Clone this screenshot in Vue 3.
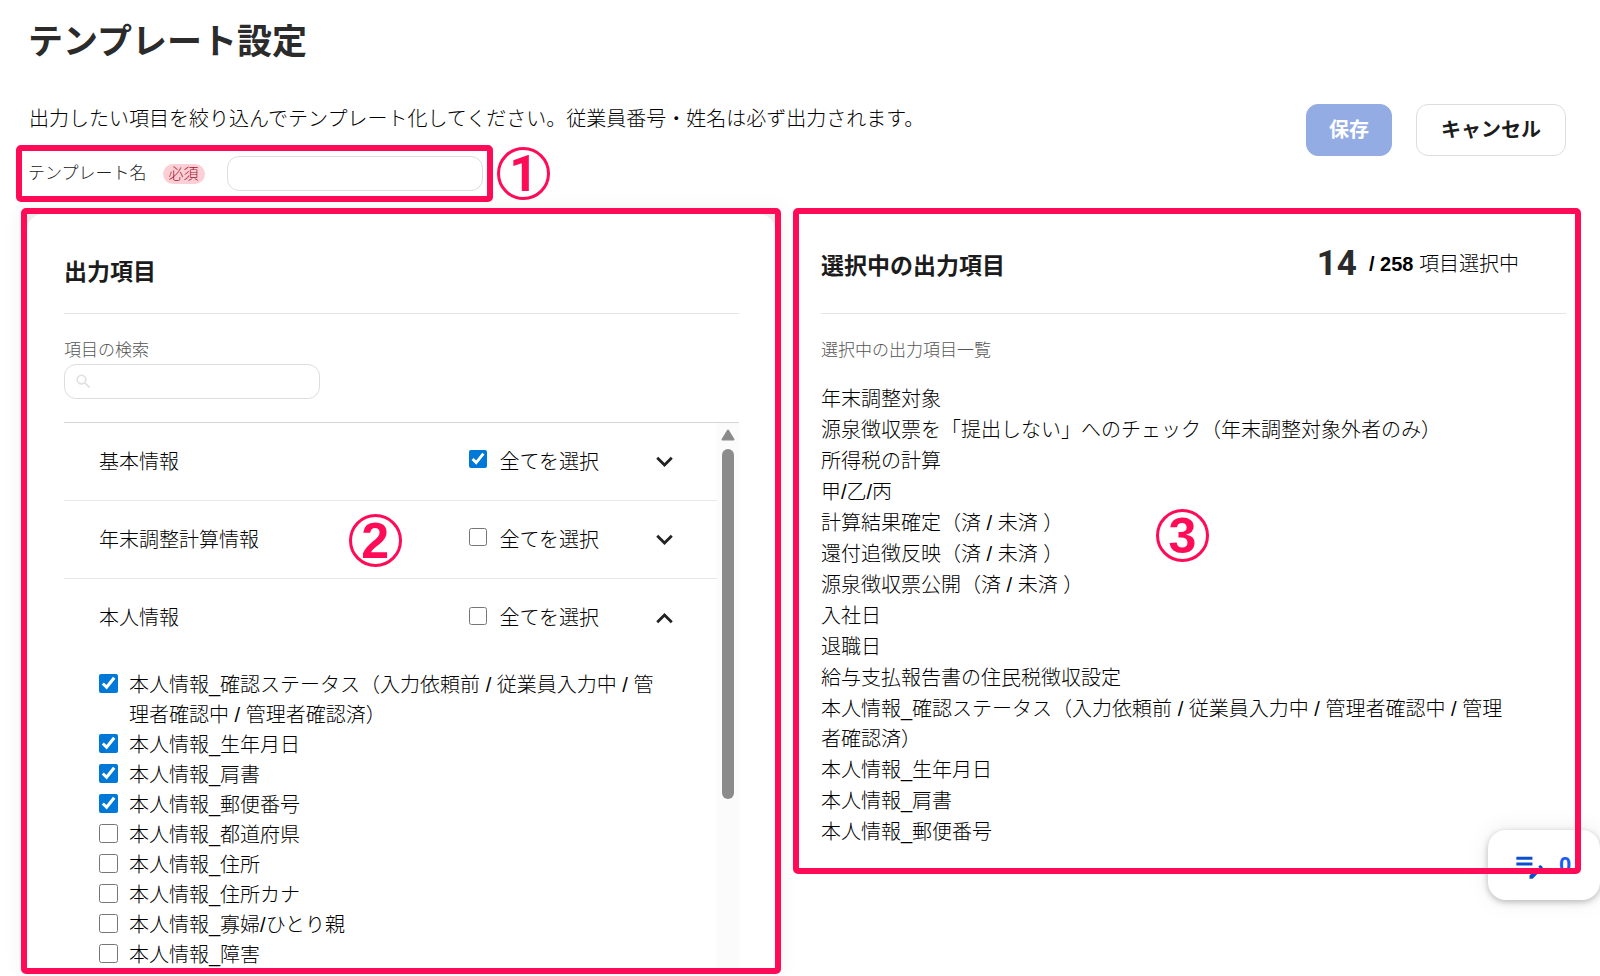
<script setup>
import { ref } from 'vue'

const name = ref('')
const query = ref('')

const groups = ref([
  { id: 'basic', label: '基本情報', all: true, open: false },
  { id: 'yearend', label: '年末調整計算情報', all: false, open: false },
  { id: 'person', label: '本人情報', all: false, open: true }
])

const fields = ref([
  { label: '本人情報_確認ステータス（入力依頼前 / 従業員入力中 / 管理者確認中 / 管理者確認済）', on: true },
  { label: '本人情報_生年月日', on: true },
  { label: '本人情報_肩書', on: true },
  { label: '本人情報_郵便番号', on: true },
  { label: '本人情報_都道府県', on: false },
  { label: '本人情報_住所', on: false },
  { label: '本人情報_住所カナ', on: false },
  { label: '本人情報_寡婦/ひとり親', on: false },
  { label: '本人情報_障害', on: false }
])

const selected = [
  '年末調整対象',
  '源泉徴収票を「提出しない」へのチェック（年末調整対象外者のみ）',
  '所得税の計算',
  '甲/乙/丙',
  '計算結果確定（済 / 未済 ）',
  '還付追徴反映（済 / 未済 ）',
  '源泉徴収票公開（済 / 未済 ）',
  '入社日',
  '退職日',
  '給与支払報告書の住民税徴収設定',
  '本人情報_確認ステータス（入力依頼前 / 従業員入力中 / 管理者確認中 / 管理者確認済）',
  '本人情報_生年月日',
  '本人情報_肩書',
  '本人情報_郵便番号'
]
</script>

<template>
  <main class="page">
    <h1 class="title">テンプレート設定</h1>

    <header class="head">
      <div class="intro">
        <p class="lead">出力したい項目を絞り込んでテンプレート化してください。従業員番号・姓名は必ず出力されます。</p>
        <div class="name-line">
          <div class="name-field marked">
            <label for="tpl-name">テンプレート名</label>
            <span class="badge">必須</span>
            <input id="tpl-name" v-model="name" class="text-box" type="text" />
          </div>
          <span class="marker on-name">1</span>
        </div>
      </div>
      <div class="actions">
        <button type="button" class="btn save">保存</button>
        <button type="button" class="btn">キャンセル</button>
      </div>
    </header>

    <div class="columns">
      <section class="panel source marked">
        <div class="card">
          <h2 class="heading">出力項目</h2>
          <label class="caption" for="search">項目の検索</label>
          <div class="search">
            <svg viewBox="0 0 24 24" aria-hidden="true"><path d="M15.5 14h-.79l-.28-.27A6.47 6.47 0 0 0 16 9.500 6.500 6.500 0 1 0 9.500 16c1.610 0 3.090-.59 4.230-1.570l.27.28v.79l5 4.990L20.490 19l-4.990-5zm-6 0C7.010 14 5 11.990 5 9.500S7.010 5 9.500 5 14 7.010 14 9.500 11.990 14 9.500 14z" /></svg>
            <input id="search" v-model="query" class="text-box" type="text" />
          </div>

          <div class="scroller">
            <div class="groups">
              <div v-for="g in groups" :key="g.id" class="group">
                <span class="group-name">{{ g.label }}</span>
                <label class="all"><input v-model="g.all" type="checkbox" />全てを選択</label>
                <button type="button" class="toggle" :aria-label="g.label" :aria-expanded="g.open" @click="g.open = !g.open">
                  <svg viewBox="0 0 24 24" aria-hidden="true">
                    <path v-if="g.open" d="M7.410 15.410L12 10.830l4.590 4.580L18 14l-6-6-6 6z" />
                    <path v-else d="M7.410 8.590L12 13.170l4.590-4.580L18 10l-6 6-6-6z" />
                  </svg>
                </button>
              </div>
              <ul class="fields">
                <li v-for="f in fields" :key="f.label">
                  <label class="field"><input v-model="f.on" type="checkbox" /><span>{{ f.label }}</span></label>
                </li>
              </ul>
            </div>
            <div class="track" aria-hidden="true">
              <svg viewBox="0 0 14 12"><path d="M7 1.500L12.500 10.500H1.500z" /></svg>
              <div class="thumb"></div>
            </div>
          </div>
        </div>
        <span class="marker on-source">2</span>
      </section>

      <section class="panel chosen marked">
        <div class="chosen-head">
          <h2>選択中の出力項目</h2>
          <p class="count"><strong class="now">14</strong><span><strong>/ 258</strong> 項目選択中</span></p>
        </div>
        <p class="caption">選択中の出力項目一覧</p>
        <ul class="chosen-list">
          <li v-for="s in selected" :key="s">{{ s }}</li>
        </ul>
        <span class="marker on-chosen">3</span>
      </section>
    </div>

    <button type="button" class="notes" aria-label="メモ">
      <svg viewBox="0 0 24 24" aria-hidden="true"><path d="M3 10h11v2H3v-2zm0-2h11V6H3v2zm0 8h7v-2H3v2zm15.010-3.130l.71-.71c.39-.39 1.020-.39 1.410 0l.71.71c.39.39.39 1.020 0 1.410l-.71.71-2.120-2.120zm-.71.71l-5.300 5.300V21h2.120l5.300-5.300-2.120-2.120z" /></svg>
      <span>0</span>
    </button>
  </main>
</template>

<style>
body {
  margin: 0;
  background: #fff;
}
</style>

<style scoped>
* {
  box-sizing: border-box;
}
.page {
  position: relative;
  display: flex;
  flex-direction: column;
  height: 100vh;
  padding: 16px 0 2px;
  overflow: hidden;
  color: #000;
  font: 300 20px/30px "Liberation Sans", "Noto Sans CJK JP", sans-serif;
}
h1, h2, p, ul {
  margin: 0;
  padding: 0;
}
ul {
  list-style: none;
}
button, input {
  font: inherit;
}
.title {
  padding-left: 28px;
  color: #2b2b2b;
  font-size: 35px;
  line-height: 52px;
  font-weight: 700;
}
.marked {
  border: 6px solid #ff0b58;
  border-radius: 5px;
}
.marker {
  display: flex;
  align-items: center;
  justify-content: center;
  width: 53px;
  height: 53px;
  border: 3px solid #ff0b58;
  border-radius: 50%;
  color: #ff0b58;
  font: 700 50px/52px "Liberation Sans", sans-serif;
}
.on-name {
  font-family: Roboto, sans-serif;
}
.head {
  display: flex;
  justify-content: space-between;
  margin-top: 36px;
  padding: 0 34px 0 16px;
}
.lead {
  padding-left: 13px;
}
.name-line {
  display: flex;
  align-items: center;
  gap: 4px;
  margin-top: 11px;
}
.name-field {
  display: flex;
  align-items: center;
  width: 477px;
  height: 57px;
  padding: 0 4px 0 6px;
  color: #222;
  font-size: 17px;
}
.badge {
  margin-left: 16px;
  padding: 0 6px;
  border-radius: 10px;
  background: #fbcfd5;
  color: #a8152f;
  font-size: 15px;
  line-height: 20px;
}
.text-box {
  width: 256px;
  height: 35px;
  padding: 0 12px;
  border: 1px solid #ddd;
  border-radius: 12px;
  background: #fff;
}
.name-field .text-box {
  margin-left: auto;
}
.actions {
  display: flex;
  align-items: flex-start;
  gap: 24px;
}
.btn {
  height: 52px;
  padding: 0 24px;
  border: 1px solid #ddd;
  border-radius: 12px;
  background: #fff;
  color: #1c1c1c;
  font-weight: 700;
}
.save {
  padding: 0 22px;
  border-color: #94ace4;
  background: #94ace4;
  color: #fff;
}
.columns {
  display: grid;
  grid-template-columns: 760fr 788fr;
  grid-template-rows: minmax(0, 1fr);
  gap: 12px;
  flex: 1;
  min-height: 0;
  margin-top: 6px;
  padding: 0 19px 0 21px;
}
.panel {
  position: relative;
  z-index: 2;
}
.source {
  background: #eee;
  box-shadow: 0 0 20px rgba(0, 0, 0, 0.06);
}
.card {
  display: flex;
  flex-direction: column;
  height: 100%;
  padding: 41px 36px 0 37px;
  overflow: hidden;
  border-radius: 16px 16px 0 0;
  background: #fff;
}
h2 {
  color: #1c1c1c;
  font-size: 23px;
  line-height: 34px;
  font-weight: 700;
}
.heading {
  padding-bottom: 24px;
  border-bottom: 1px solid #e4e4e4;
}
.caption {
  display: block;
  margin-top: 24px;
  color: #555;
  font-size: 17px;
  line-height: 26px;
}
.search {
  position: relative;
  display: flex;
  margin: 0 0 23px;
}
.search .text-box {
  padding-left: 36px;
}
.search svg {
  position: absolute;
  top: 8px;
  left: 10px;
  width: 19px;
  height: 19px;
  fill: #e0e0e0;
}
.scroller {
  display: flex;
  flex: 1;
  min-height: 0;
  border-top: 1px solid #d8d3d4;
}
.groups {
  flex: 1;
  min-width: 0;
  overflow: hidden;
}
.group {
  display: flex;
  align-items: center;
  height: 78px;
  padding: 0 36px 0 35px;
  border-bottom: 1px solid #e8e8e8;
}
.group:nth-child(3) {
  border-bottom: 0;
}
.group-name {
  flex: 1;
}
.all {
  display: flex;
  align-items: center;
  gap: 12px;
}
input[type="checkbox"] {
  flex: none;
  width: 18px;
  height: 18px;
  margin: 0;
  accent-color: #0078d7;
}
.all input {
  margin-bottom: 5px;
}
.toggle {
  display: flex;
  margin-left: 49px;
  padding: 0;
  border: 0;
  background: none;
}
.toggle svg {
  width: 33px;
  height: 33px;
  fill: #222;
}
.fields {
  padding: 13px 46px 0 35px;
}
.field {
  display: flex;
  align-items: flex-start;
  gap: 11px;
}
.field input {
  width: 19px;
  height: 19px;
  margin-top: 4px;
}
.track {
  display: flex;
  flex-direction: column;
  align-items: center;
  width: 22px;
  padding-top: 6px;
  background: #fbfbfb;
}
.track svg {
  width: 14px;
  height: 12px;
  fill: #8b8b8b;
  stroke: #8b8b8b;
  stroke-width: 2;
  stroke-linejoin: round;
}
.thumb {
  width: 12px;
  height: 65%;
  margin-top: 8px;
  border-radius: 6px;
  background: #8b8b8b;
}
.on-source {
  position: absolute;
  top: 300px;
  left: 43%;
}
.chosen {
  align-self: start;
  padding: 0 9px 21px 22px;
}
.chosen-head {
  display: flex;
  align-items: center;
  justify-content: space-between;
  height: 100px;
  padding-right: 47px;
  border-bottom: 1px solid #e4e4e4;
}
.chosen-head h2 {
  padding-top: 4px;
}
.count {
  display: flex;
  align-items: center;
  gap: 12px;
}
.count strong {
  font-weight: 700;
}
.count .now {
  color: #2b2b2b;
  font: 700 35px/40px Roboto, sans-serif;
}
.chosen-list {
  display: grid;
  gap: 1px;
  margin-top: 20px;
  padding-right: 50px;
}
.on-chosen {
  position: absolute;
  top: 295px;
  left: 46%;
}
.notes {
  position: absolute;
  z-index: 1;
  right: 0;
  bottom: 76px;
  display: flex;
  align-items: center;
  gap: 12px;
  width: 112px;
  height: 70px;
  padding: 0 0 0 24px;
  border: 0;
  border-radius: 18px;
  background: #fff;
  box-shadow: 0 2px 6px rgba(0, 0, 0, 0.25), 0 0 24px rgba(0, 0, 0, 0.08);
  color: #1a5cf0;
  font-size: 22px;
  font-weight: 700;
}
.notes svg {
  width: 35px;
  height: 35px;
  fill: #0b4fd0;
}
</style>
